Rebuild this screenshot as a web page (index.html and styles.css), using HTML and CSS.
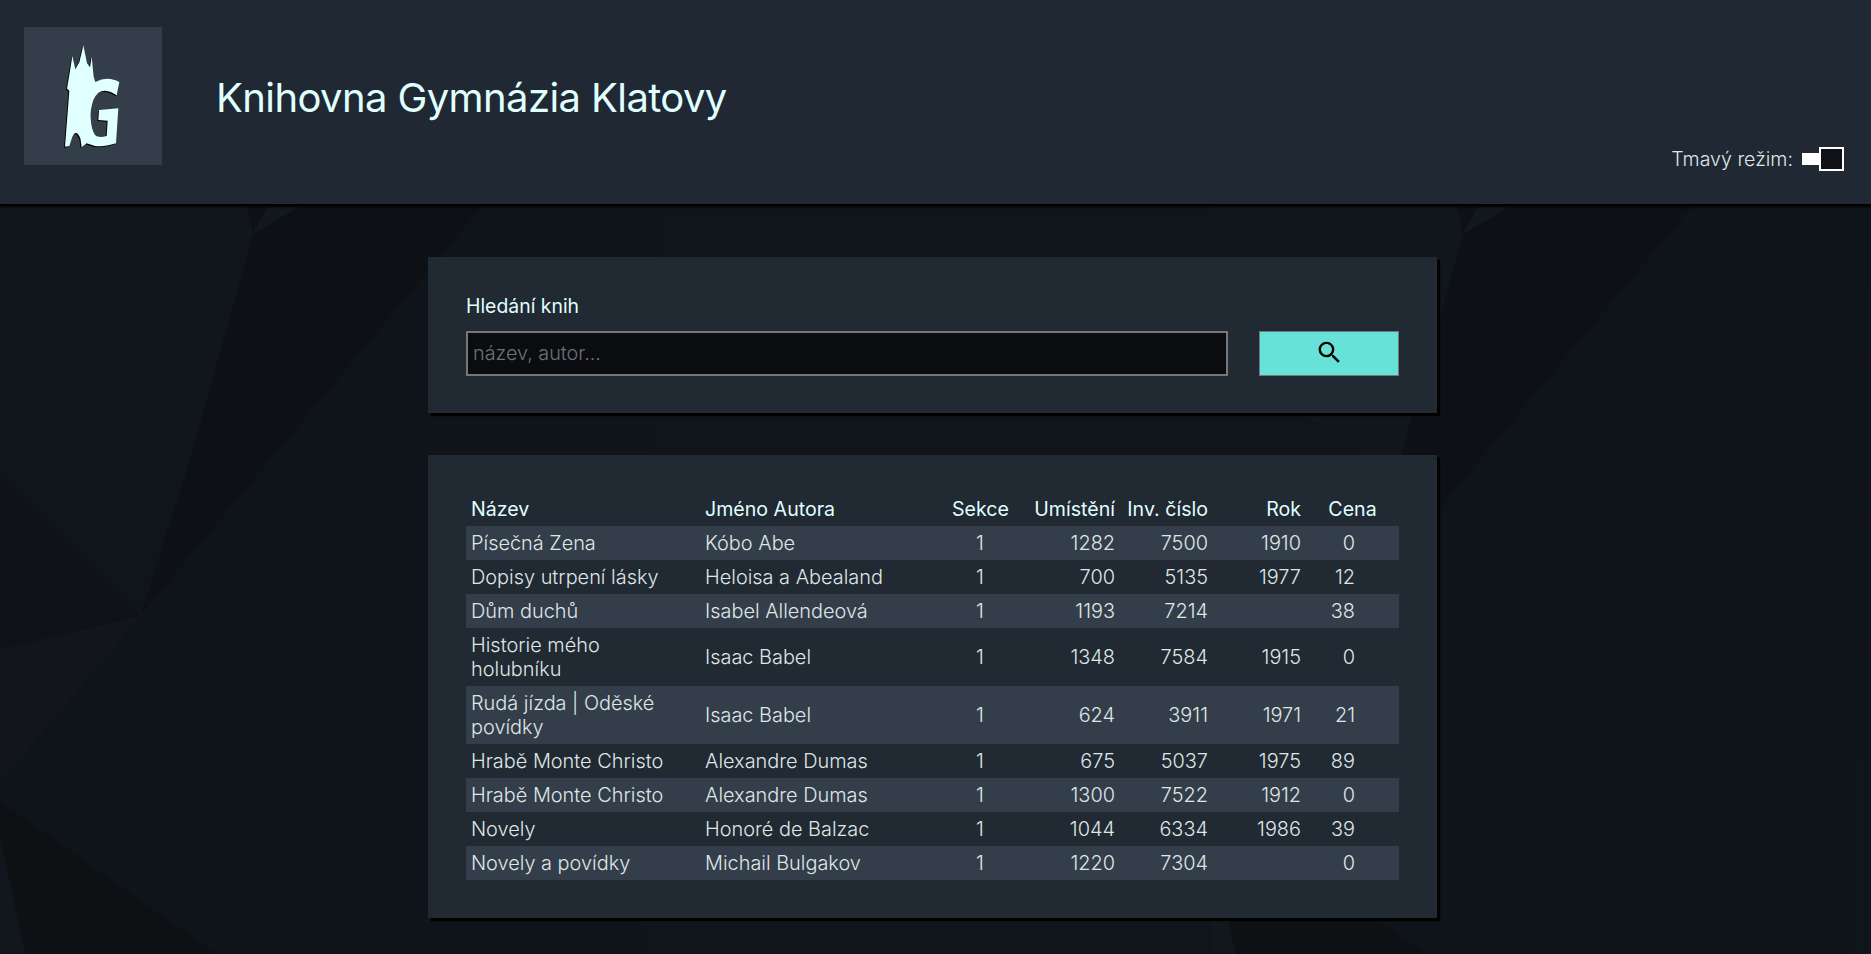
FILE: index.html
```html
<!DOCTYPE html>
<html lang="cs">
<head>
  <meta charset="UTF-8" />
  <title>Knihovna Gymnázia Klatovy</title>
  <link rel="stylesheet" href="styles.css">
</head>
<body>
  <!-- polygon wallpaper behind the page -->
  <svg class="wallpaper" width="1871" height="954" aria-hidden="true">
    <defs>
      <pattern id="tile" width="1210" height="954" patternUnits="userSpaceOnUse">
        <rect width="1210" height="954" fill="#0f141a"/>
        <polygon points="0,207 188,207 185,476 0,351" fill="#11161c"/>
        <polygon points="188,207 247,207 253,234 185,476" fill="#11161d"/>
        <polygon points="0,351 185,476 140,616 0,476" fill="#10151b"/>
        <polygon points="0,476 140,616 0,650" fill="#0e1218"/>
        <polygon points="0,650 140,616 0,782" fill="#12161b"/>
        <polygon points="253,234 298,207 482,207 140,616 185,476" fill="#0d1115"/>
        <polygon points="247,207 268,207 253,234" fill="#0d1115"/>
        <polygon points="268,207 298,207 253,234" fill="#13181d"/>
        <polygon points="0,801 217,954 25,954 0,839" fill="#0d1114"/>
        <polygon points="0,839 25,954 0,954" fill="#12171e"/>
        <polygon points="661,207 1210,207 1210,954 642,954" fill="#10141b"/>
      </pattern>
    </defs>
    <rect width="1871" height="954" fill="url(#tile)"/>
  </svg>

  <header class="top">
    <div class="logo">
      <svg class="logo-mark" width="110" height="130" viewBox="0 0 330 390">
        <path class="logo-edge" d="M75 350L88 182L81 176L90 122L97 78L106 118L118 97L130 46L141 100L150 112L155 80L161 140L166 156Q190 143 212 147Q228 150 238 156L230 196Q212 183 195 182Q172 182 160 210Q150 240 152 265Q154 300 165 315Q175 325 200 318L203 272L175 270L177 240L235 235L228 340Q190 352 165 348L140 340L125 352L121 325Q108 295 97 320L88 348Z"/>
        <path class="logo-fill" d="M75 350L88 182L81 176L90 122L97 78L106 118L118 97L130 46L141 100L150 112L155 80L161 140L166 156Q190 143 212 147Q228 150 238 156L230 196Q212 183 195 182Q172 182 160 210Q150 240 152 265Q154 300 165 315Q175 325 200 318L203 272L175 270L177 240L235 235L228 340Q190 352 165 348L140 340L125 352L121 325Q108 295 97 320L88 348Z"/>
      </svg>
    </div>
    <h1>Knihovna Gymnázia Klatovy</h1>
    <div class="mode">
      <span>Tmavý režim:</span>
      <div class="switch"><div class="switch-track"></div><div class="switch-knob"></div></div>
    </div>
  </header>

  <main class="content">
    <section class="panel search-panel">
      <label class="search-label" for="hledat">Hledání knih</label>
      <div class="search-row">
        <input class="search-input" id="hledat" type="text" placeholder="název, autor...">
        <button class="search-btn" aria-label="Hledat">
          <svg width="29" height="29" viewBox="0 0 24 24"><path d="M15.5 14h-.79l-.28-.27A6.47 6.47 0 0 0 16 9.5 6.5 6.5 0 1 0 9.5 16c1.61 0 3.09-.59 4.23-1.57l.27.28v.79l5 4.99L20.49 19l-4.99-5zm-6 0C7.01 14 5 11.99 5 9.5S7.01 5 9.5 5 14 7.01 14 9.5 11.99 14 9.5 14z"/></svg>
        </button>
      </div>
    </section>

    <section class="panel results-panel">
      <table class="books">
        <colgroup>
          <col class="c-name"><col class="c-author"><col class="c-sec"><col class="c-place"><col class="c-inv"><col class="c-year"><col class="c-price">
        </colgroup>
        <thead>
          <tr>
            <th>Název</th><th>Jméno Autora</th><th class="mid">Sekce</th><th class="num">Umístění</th><th class="num">Inv. číslo</th><th class="num">Rok</th><th class="mid">Cena</th>
          </tr>
        </thead>
        <tbody>
          <tr><td>Písečná Zena</td><td>Kóbo Abe</td><td class="mid">1</td><td class="num">1282</td><td class="num">7500</td><td class="num">1910</td><td class="price">0</td></tr>
          <tr><td>Dopisy utrpení lásky</td><td>Heloisa a Abealand</td><td class="mid">1</td><td class="num">700</td><td class="num">5135</td><td class="num">1977</td><td class="price">12</td></tr>
          <tr><td>Dům duchů</td><td>Isabel Allendeová</td><td class="mid">1</td><td class="num">1193</td><td class="num">7214</td><td class="num"></td><td class="price">38</td></tr>
          <tr><td>Historie mého holubníku</td><td>Isaac Babel</td><td class="mid">1</td><td class="num">1348</td><td class="num">7584</td><td class="num">1915</td><td class="price">0</td></tr>
          <tr><td>Rudá jízda | Oděské povídky</td><td>Isaac Babel</td><td class="mid">1</td><td class="num">624</td><td class="num">3911</td><td class="num">1971</td><td class="price">21</td></tr>
          <tr><td>Hrabě Monte Christo</td><td>Alexandre Dumas</td><td class="mid">1</td><td class="num">675</td><td class="num">5037</td><td class="num">1975</td><td class="price">89</td></tr>
          <tr><td>Hrabě Monte Christo</td><td>Alexandre Dumas</td><td class="mid">1</td><td class="num">1300</td><td class="num">7522</td><td class="num">1912</td><td class="price">0</td></tr>
          <tr><td>Novely</td><td>Honoré de Balzac</td><td class="mid">1</td><td class="num">1044</td><td class="num">6334</td><td class="num">1986</td><td class="price">39</td></tr>
          <tr><td>Novely a povídky</td><td>Michail Bulgakov</td><td class="mid">1</td><td class="num">1220</td><td class="num">7304</td><td class="num"></td><td class="price">0</td></tr>
        </tbody>
      </table>
    </section>
  </main>
</body>
</html>
```

FILE: styles.css
```css
html, body {
  height: 100%;
}
body {
  margin: 0;
  height: 954px;
  overflow: hidden;
  background-color: #0f141a;
  font-family: Inter, "Noto Sans", sans-serif;
  color: #dfe6e6;
}
.wallpaper {
  position: absolute;
  top: 0;
  left: 0;
  z-index: -1;
}

/* header */
.top {
  height: 204px;
  box-sizing: border-box;
  padding: 27px 27px 0 24px;
  display: flex;
  align-items: flex-start;
  background-color: #202833;
  box-shadow: 0 3px 2px #000;
}
.logo {
  width: 138px;
  height: 138px;
  display: flex;
  align-items: center;
  justify-content: center;
  background-color: #343e4a;
}
.logo-mark {
  margin: -2px 0 0 4px;
}
.logo-edge {
  fill: #000;
  transform: translate(-3px, 3px);
}
.logo-fill {
  fill: #e0ffff;
}
.top h1 {
  margin: 2px 0 0 54px;
  height: 138px;
  line-height: 138px;
  font-size: 40px;
  font-weight: 400;
  letter-spacing: -0.6px;
  color: #e0ffff;
}
.mode {
  margin-left: auto;
  margin-top: 120px;
  display: flex;
  align-items: center;
  gap: 9px;
  font-size: 19.6px;
  font-weight: 300;
}
.switch {
  display: flex;
  align-items: center;
}
.switch-track {
  width: 17px;
  height: 12px;
  background-color: #fff;
}
.switch-knob {
  width: 25px;
  height: 24px;
  box-sizing: border-box;
  border: 2px solid #fff;
  background-color: #0f1116;
}

/* panels */
.content {
  padding: 53px 0 0 428px;
  display: flex;
  flex-direction: column;
  gap: 42px;
}
.panel {
  width: 1009px;
  box-sizing: border-box;
  background-color: #212933;
  box-shadow: 3px 3px 1px #000;
  padding: 38px;
}
.search-panel {
  height: 156px;
  padding-top: 36px;
}
.search-label {
  display: block;
  font-size: 19.4px;
  line-height: 26px;
  color: #e0ffff;
}
.search-row {
  margin-top: 12px;
  display: flex;
  gap: 31px;
}
.search-input {
  width: 762px;
  height: 45px;
  box-sizing: border-box;
  padding: 0 5px 2px;
  border: 2px solid #777;
  background-color: #0a0c10;
  color: #dfe6e6;
  font-family: inherit;
  font-size: 19.8px;
  font-weight: 300;
}
.search-input::placeholder {
  color: #707275;
}
.search-btn {
  width: 140px;
  height: 45px;
  padding: 0;
  display: flex;
  align-items: center;
  justify-content: center;
  border: 1px solid #777;
  background-color: #66e2d9;
}
.search-btn svg {
  margin-top: -2px;
}

/* results table */
.results-panel {
  height: 463px;
}
.books {
  width: 933px;
  table-layout: fixed;
  border-collapse: collapse;
  line-height: 24px;
}
.c-name { width: 234px; }
.c-author { width: 247px; }
.c-sec { width: 66px; }
.c-place { width: 107px; }
.c-inv { width: 93px; }
.c-year { width: 93px; }
.c-price { width: 93px; }
.books th {
  padding: 4px 5px 5px;
  text-align: left;
  font-size: 19.6px;
  font-weight: 400;
  color: #e0ffff;
}
.books td {
  padding: 5px;
  font-size: 19.9px;
  font-weight: 300;
}
.books td:first-child {
  padding-right: 15px;
}
.books tbody tr:nth-child(odd) {
  background-color: #343e4a;
}
.books .mid {
  text-align: center;
}
.books .num {
  text-align: right;
}
.books .price {
  text-align: right;
  padding-right: 44px;
}
```
